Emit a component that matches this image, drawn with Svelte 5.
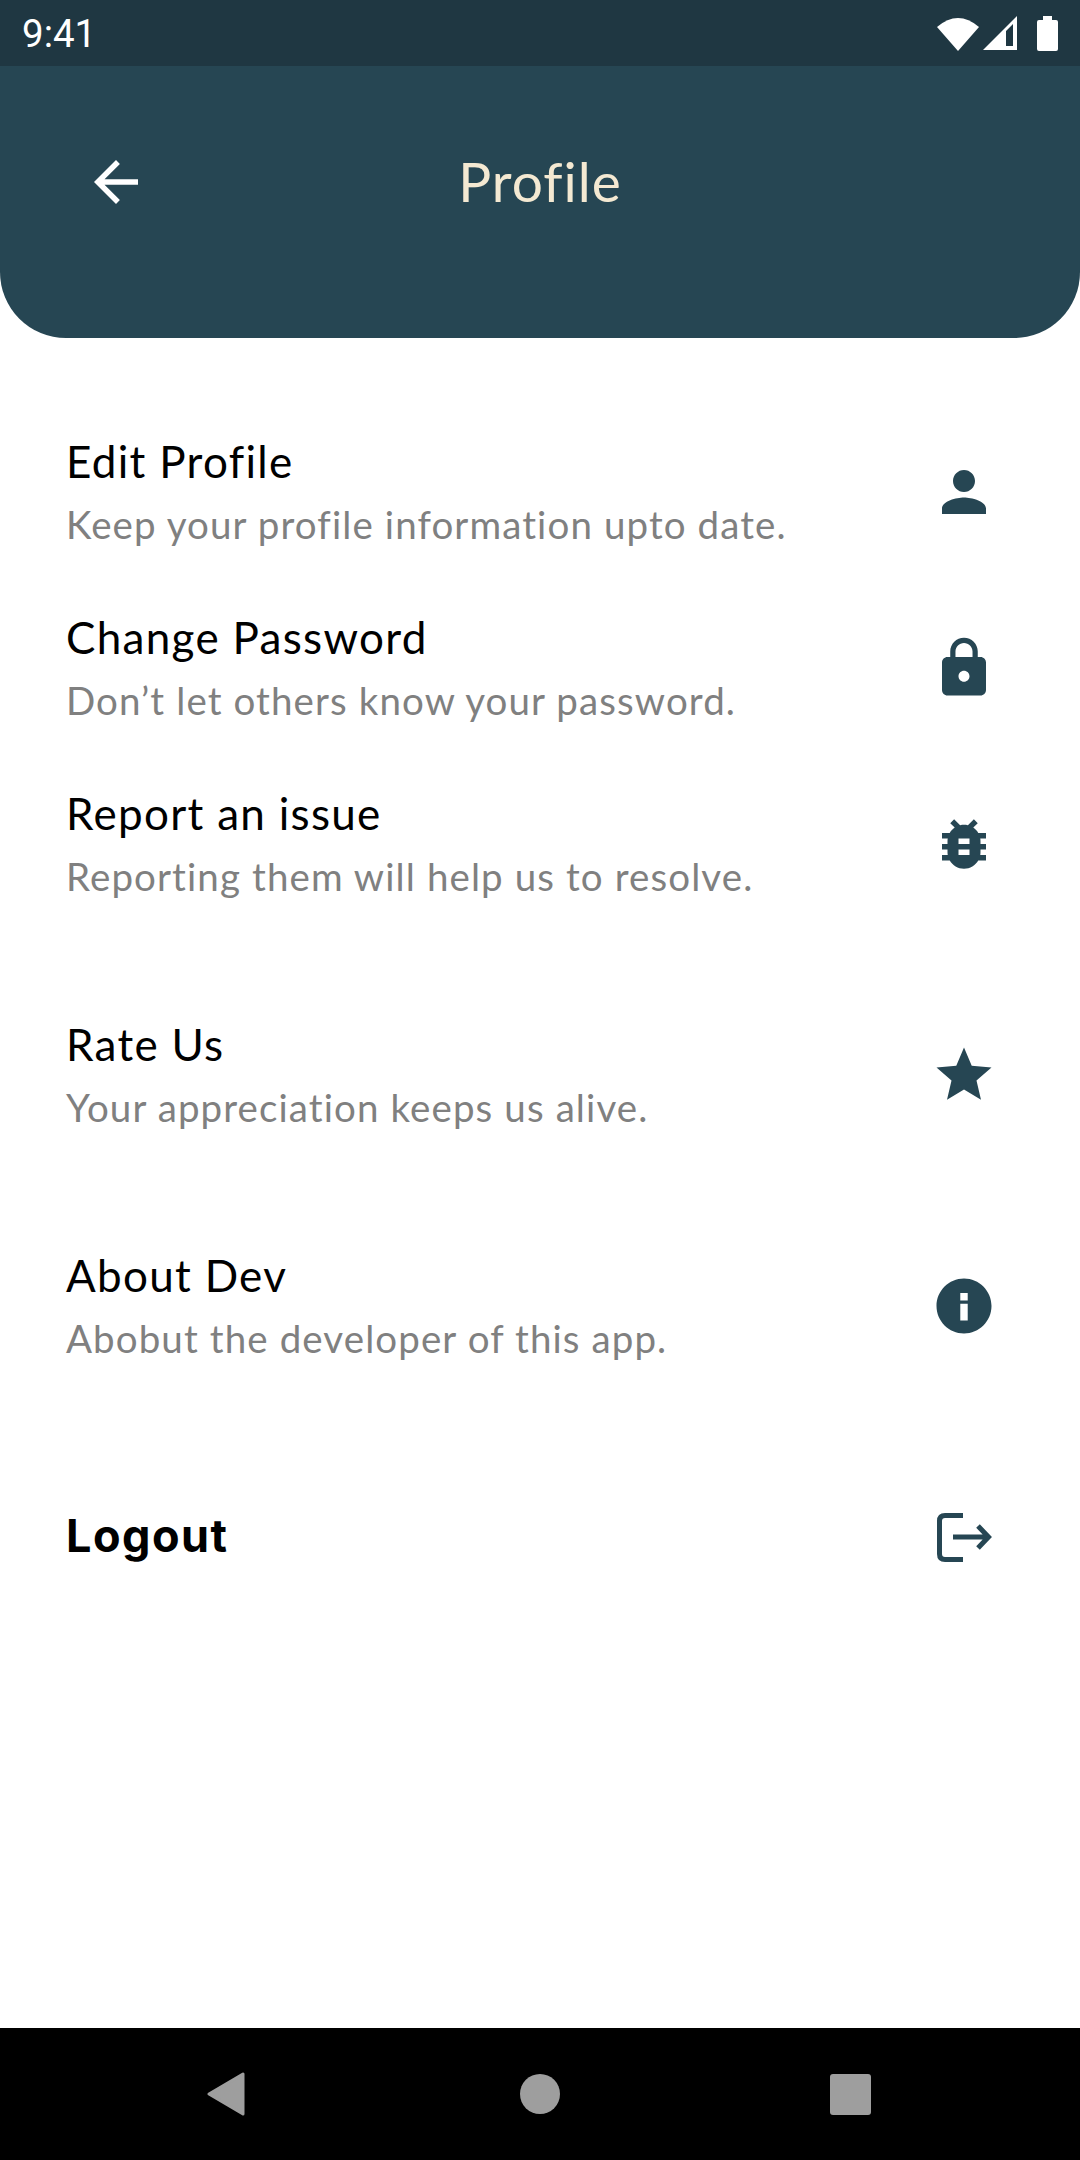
<script>
  const items = [
    { t: 'Edit Profile', s: 'Keep your profile information upto date.', i: 'person', cls: '' },
    { t: 'Change Password', s: "Don’t let others know your password.", i: 'lock', cls: '' },
    { t: 'Report an issue', s: 'Reporting them will help us to resolve.', i: 'bug', cls: 'spaced' },
    { t: 'Rate Us', s: 'Your appreciation keeps us alive.', i: 'star', cls: 'spaced' },
    { t: 'About Dev', s: 'Abobut the developer of this app.', i: 'info', cls: 'spaced' }
  ];
  const paths = {
    person: 'M12 12c2.21 0 4-1.79 4-4s-1.79-4-4-4-4 1.79-4 4 1.79 4 4 4zm0 2c-2.67 0-8 1.34-8 4v2h16v-2c0-2.66-5.33-4-8-4z',
    lock: 'M18 8h-1V6c0-2.76-2.24-5-5-5S7 3.24 7 6v2H6c-1.1 0-2 .9-2 2v10c0 1.1.9 2 2 2h12c1.1 0 2-.9 2-2V10c0-1.1-.9-2-2-2zm-6 9c-1.1 0-2-.9-2-2s.9-2 2-2 2 .9 2 2-.9 2-2 2zm3.1-9H8.9V6c0-1.71 1.39-3.1 3.1-3.1 1.71 0 3.1 1.39 3.1 3.1v2z',
    bug: 'M20 8h-2.81c-.45-.78-1.07-1.45-1.82-1.96L17 4.41 15.59 3l-2.17 2.17C12.96 5.06 12.49 5 12 5c-.49 0-.96.06-1.41.17L8.41 3 7 4.41l1.62 1.63C7.88 6.55 7.26 7.22 6.81 8H4v2h2.09c-.05.33-.09.66-.09 1v1H4v2h2v1c0 .34.04.67.09 1H4v2h2.81c1.04 1.79 2.97 3 5.19 3s4.15-1.21 5.19-3H20v-2h-2.09c.05-.33.09-.66.09-1v-1h2v-2h-2v-1c0-.34-.04-.67-.09-1H20V8zm-6 8h-4v-2h4v2zm0-4h-4v-2h4v2z',
    star: 'M12 17.27L18.18 21l-1.64-7.03L22 9.24l-7.19-.61L12 2 9.19 8.63 2 9.24l5.46 4.73L5.82 21z',
    info: 'M12 2C6.48 2 2 6.48 2 12s4.48 10 10 10 10-4.48 10-10S17.52 2 12 2zm1.35 15.3h-2.7v-6.1h2.7v6.1zm0-7.3h-2.7V7.3h2.7V10z'
  };
</script>

<div class="screen">
  <div class="status">
    <span class="time">9:41</span>
    <div class="status-icons">
      <svg width="42" height="35" viewBox="0 0 42 35"><path d="M0 11 Q21 -7 42 11 L21 35 Z" fill="#fff"/></svg>
      <svg width="34" height="34" viewBox="0 0 34 34"><path fill-rule="evenodd" d="M34 0V34H0ZM23 15V30H30V8Z" fill="#fff"/></svg>
      <svg width="21" height="35" viewBox="0 0 21 35"><path d="M6 0H15V4H19Q21 4 21 6V33Q21 35 19 35H2Q0 35 0 33V6Q0 4 2 4H6Z" fill="#fff"/></svg>
    </div>
  </div>

  <header class="appbar">
    <svg class="back" width="66" height="66" viewBox="0 0 24 24"><path d="M20 11H7.83l5.59-5.59L12 4l-8 8 8 8 1.41-1.41L7.83 13H20v-2z" fill="#fff"/></svg>
    <h1>Profile</h1>
  </header>

  <main class="list">
    {#each items as it}
      <div class="row {it.cls}">
        <div class="text">
          <div class="title">{it.t}</div>
          <div class="sub">{it.s}</div>
        </div>
        <svg class="icon" width="66" height="66" viewBox="0 0 24 24"><path d={paths[it.i]} fill="#264653"/></svg>
      </div>
    {/each}
    <div class="logout">
      <div class="logout-label">Logout</div>
      <svg class="icon" width="66" height="66" viewBox="0 0 66 66" fill="none" stroke="#264653" stroke-width="5"><path d="M32 11.5H14Q8.5 11.5 8.5 17V50Q8.5 55.5 14 55.5H32"/><path d="M22 33H57M47 22 57.5 33 47 44"/></svg>
    </div>
  </main>

  <nav class="navbar">
    <svg width="43" height="48" viewBox="0 0 43 48"><path d="M36 4V44L2 24Z" fill="#9e9e9e" stroke="#9e9e9e" stroke-width="3" stroke-linejoin="round"/></svg>
    <span class="circle"></span>
    <span class="square"></span>
  </nav>
</div>

<style>
  :global(body) { margin: 0; background: #fff; }
  .screen {
    width: 1080px; height: 2160px; display: flex; flex-direction: column;
    background: #fff; font-family: Lato, sans-serif; overflow: hidden;
  }
  .status {
    height: 66px; flex: none; background: #1f3742; display: flex; align-items: center;
    justify-content: space-between; padding: 0 22px 0 22px; box-sizing: border-box; color: #fff;
  }
  .time { font-family: Roboto, sans-serif; font-size: 38.5px; }
  .status-icons { display: flex; align-items: center; gap: 4px; }
  .status-icons svg:last-child { margin-left: 16px; }
  .appbar {
    height: 272px; flex: none; background: #264653; border-radius: 0 0 66px 66px;
    display: flex; align-items: flex-start; justify-content: center; position: relative;
  }
  .back { position: absolute; left: 83px; top: 83px; }
  h1 { margin: 80px 0 0; font-weight: 400; font-size: 55px; line-height: 70px; color: #f4e9d2; letter-spacing: 1px; }
  .list { flex: 1; padding: 66px 83px 0 66px; display: flex; flex-direction: column; }
  .row { display: flex; justify-content: space-between; align-items: center; height: 176px; }
  .row.spaced { margin-bottom: 55px; }
  .text { margin-bottom: 2px; }
  .title { font-size: 44px; line-height: 56px; color: #000; letter-spacing: 1.3px; }
  .sub { font-size: 38.5px; line-height: 50px; color: #808080; margin-top: 10px; letter-spacing: 1.1px; }
  .icon { flex: none; }
  .logout { display: flex; justify-content: space-between; align-items: center; margin-top: 55px; }
  .logout-label { font-family: Inter, sans-serif; font-weight: 700; font-size: 45px; color: #000; letter-spacing: 1.5px; padding-bottom: 3px; }
  .navbar {
    height: 132px; flex: none; background: #000; display: flex; align-items: center;
    justify-content: space-between; padding: 0 209px 0 207px; box-sizing: border-box;
  }
  .circle { width: 40px; height: 40px; border-radius: 50%; background: #9e9e9e; }
  .square { width: 41px; height: 41px; border-radius: 3px; background: #9e9e9e; }
</style>
